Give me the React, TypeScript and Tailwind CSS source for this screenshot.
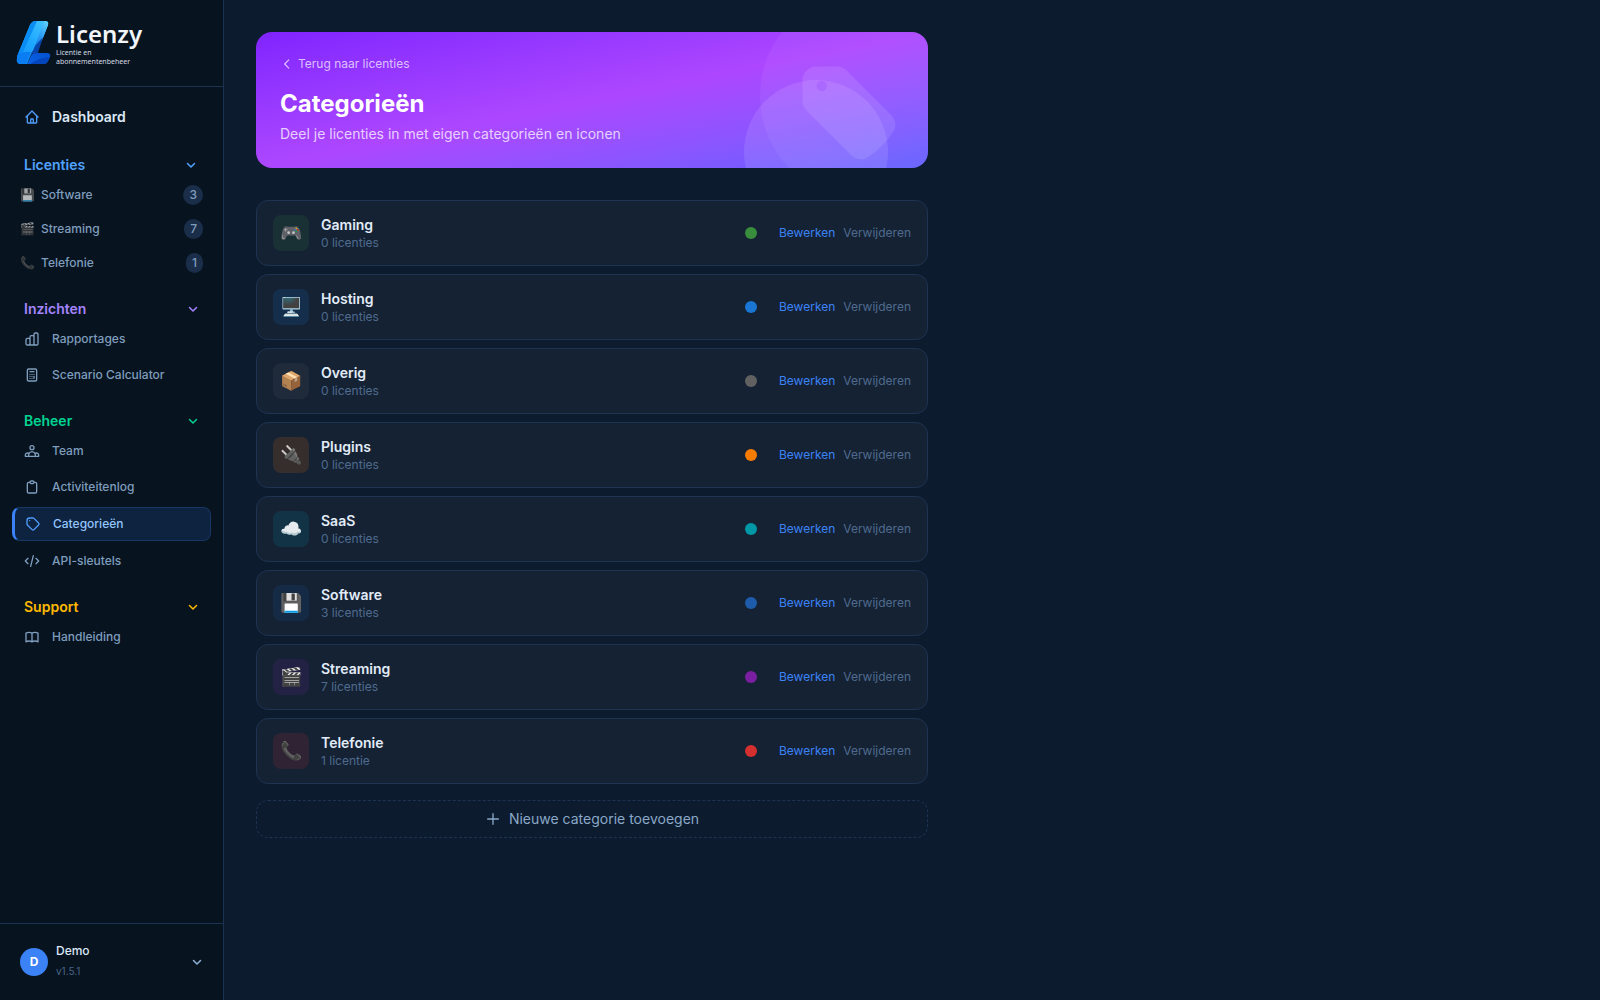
import { useState } from 'react'
import type { ReactNode } from 'react'

interface Category {
  name: string
  emoji: string
  count: number
  dot: string
  tile: string
}

interface NavItem {
  label: string
  path: string
  active?: boolean
}

const categories: Category[] = [
  { name: 'Gaming', emoji: '🎮', count: 0, dot: 'bg-[#388e3c]', tile: 'bg-[#388e3c]/15' },
  { name: 'Hosting', emoji: '🖥️', count: 0, dot: 'bg-[#1976d2]', tile: 'bg-[#1976d2]/15' },
  { name: 'Overig', emoji: '📦', count: 0, dot: 'bg-[#616161]', tile: 'bg-[#616161]/15' },
  { name: 'Plugins', emoji: '🔌', count: 0, dot: 'bg-[#f57c00]', tile: 'bg-[#f57c00]/15' },
  { name: 'SaaS', emoji: '☁️', count: 0, dot: 'bg-[#0097a7]', tile: 'bg-[#0097a7]/15' },
  { name: 'Software', emoji: '💾', count: 3, dot: 'bg-[#1e5cab]', tile: 'bg-[#1e5cab]/15' },
  { name: 'Streaming', emoji: '🎬', count: 7, dot: 'bg-[#7b1fa2]', tile: 'bg-[#7b1fa2]/15' },
  { name: 'Telefonie', emoji: '📞', count: 1, dot: 'bg-[#d32f2f]', tile: 'bg-[#d32f2f]/15' },
]

const icons = {
  home: 'M3 12l2-2m0 0l7-7 7 7M5 10v10a1 1 0 001 1h3m10-11l2 2m-2-2v10a1 1 0 01-1 1h-3m-6 0a1 1 0 001-1v-4a1 1 0 011-1h2a1 1 0 011 1v4a1 1 0 001 1m-6 0h6',
  chart: 'M9 19v-6a2 2 0 00-2-2H5a2 2 0 00-2 2v6a2 2 0 002 2h2a2 2 0 002-2zm0 0V9a2 2 0 012-2h2a2 2 0 012 2v10m-6 0a2 2 0 002 2h2a2 2 0 002-2m0 0V5a2 2 0 012-2h2a2 2 0 012 2v14a2 2 0 01-2 2h-2a2 2 0 01-2-2z',
  calculator: 'M9 7h6m0 10v-3m-3 3h.01M9 17h.01M9 14h.01M12 14h.01M15 11h.01M12 11h.01M9 11h.01M7 21h10a2 2 0 002-2V5a2 2 0 00-2-2H7a2 2 0 00-2 2v14a2 2 0 002 2z',
  team: 'M17 20h5v-2a3 3 0 00-5.356-1.857M17 20H7m10 0v-2c0-.656-.126-1.283-.356-1.857M7 20H2v-2a3 3 0 015.356-1.857M7 20v-2c0-.656.126-1.283.356-1.857m0 0a5.002 5.002 0 019.288 0M15 7a3 3 0 11-6 0 3 3 0 016 0z',
  clipboard: 'M9 5H7a2 2 0 00-2 2v12a2 2 0 002 2h10a2 2 0 002-2V7a2 2 0 00-2-2h-2M9 5a2 2 0 002 2h2a2 2 0 002-2M9 5a2 2 0 012-2h2a2 2 0 012 2',
  tag: 'M7 7h.01M7 3h5c.512 0 1.024.195 1.414.586l7 7a2 2 0 010 2.828l-7 7a2 2 0 01-2.828 0l-7-7A1.994 1.994 0 013 12V7a4 4 0 014-4z',
  code: 'M10 20l4-16m4 4l4 4-4 4M6 16l-4-4 4-4',
  book: 'M12 6.253v13m0-13C10.832 5.477 9.246 5 7.5 5S4.168 5.477 3 6.253v13C4.168 18.477 5.754 18 7.5 18s3.332.477 4.5 1.253m0-13C13.168 5.477 14.754 5 16.5 5c1.747 0 3.332.477 4.5 1.253v13C19.832 18.477 18.247 18 16.5 18c-1.746 0-3.332.477-4.5 1.253',
  down: 'M19 9l-7 7-7-7',
  left: 'M15 19l-7-7 7-7',
  plus: 'M12 4v16m8-8H4',
}

const insights: NavItem[] = [
  { label: 'Rapportages', path: icons.chart },
  { label: 'Scenario Calculator', path: icons.calculator },
]

const management: NavItem[] = [
  { label: 'Team', path: icons.team },
  { label: 'Activiteitenlog', path: icons.clipboard },
  { label: 'Categorieën', path: icons.tag, active: true },
  { label: 'API-sleutels', path: icons.code },
]

const support: NavItem[] = [{ label: 'Handleiding', path: icons.book }]

function Icon({ path, className, stroke = 2 }: { path: string; className: string; stroke?: number }) {
  return (
    <svg
      viewBox="0 0 24 24"
      fill="none"
      stroke="currentColor"
      strokeWidth={stroke}
      strokeLinecap="round"
      strokeLinejoin="round"
      aria-hidden="true"
      className={className}
    >
      <path d={path} />
    </svg>
  )
}

function Logo() {
  return (
    <a href="#" className="flex items-start gap-1">
      <svg viewBox="0 0 36 46" className="h-[46px] w-9 shrink-0" aria-hidden="true">
        <defs>
          <linearGradient id="stem" x1="0.8" y1="0" x2="0.2" y2="1">
            <stop offset="0" stopColor="#3fc0ff" />
            <stop offset="0.5" stopColor="#1ea8ff" />
            <stop offset="1" stopColor="#1492fa" />
          </linearGradient>
          <linearGradient id="side" x1="0.8" y1="0" x2="0.2" y2="1">
            <stop offset="0" stopColor="#5bcdfb" />
            <stop offset="0.5" stopColor="#2fa0f5" />
            <stop offset="1" stopColor="#1272e0" />
          </linearGradient>
          <linearGradient id="foot" x1="0" y1="1" x2="1" y2="0">
            <stop offset="0" stopColor="#0a63e6" />
            <stop offset="1" stopColor="#0450d0" />
          </linearGradient>
        </defs>
        <path d="M28 14 L22 33 L14 38 L20 20 Z" fill="#063c9e" />
        <path d="M20 1 H29 Q33 1 32 5 L26 20 L16 32 L11 44 H5 Q0 44 1 38 Q1 36 2 34 L14 5 Q16 1 20 1 Z" fill="url(#stem)" />
        <path d="M28 1 H29 Q33 1 32 5 L27 18 L18 29 Z" fill="url(#side)" />
        <path d="M27 17 L21 33 H16 L19 26 Z" fill="#0747ac" />
        <path d="M20 1 H21 L7 32 L2 34 L14 5 Q16 1 20 1 Z" fill="#0a8cf5" />
        <path d="M2 34 Q8 31 15 32 L10 44 H5 Q0 44 1 38 Z" fill="#0b7df2" />
        <path d="M15 36 Q17 33 22 33 H31 Q35 33 34 37 L32 41 Q31 44 27 44 H11 Z" fill="url(#foot)" />
        <path d="M34 37 Q24 37 14 44 H27 Q31 44 32 41 Z" fill="#0345bd" />
      </svg>
      <div className="font-['Noto_Sans',sans-serif]">
        <div className="text-2xl leading-7 font-semibold text-[#f1f5f9]">Licenzy</div>
        <div className="w-[90px] text-[7px] leading-[9px] text-[#d5dbe3]">
          Licentie en
          <br />
          abonnementenbeheer
        </div>
      </div>
    </a>
  )
}

function Section({
  title,
  color,
  narrow,
  children,
}: {
  title: string
  color: string
  narrow?: boolean
  children: ReactNode
}) {
  const [open, setOpen] = useState(true)

  return (
    <section className="flex flex-col gap-1">
      <button
        onClick={() => setOpen(!open)}
        className={`flex items-center justify-between pl-3 text-sm font-semibold ${narrow ? 'pr-3.5' : 'pr-3'} ${color}`}
      >
        {title}
        <Icon path={icons.down} className="size-3" stroke={3} />
      </button>
      {open && children}
    </section>
  )
}

function NavList({ items }: { items: NavItem[] }) {
  return (
    <ul className="flex flex-col gap-1">
      {items.map(item => (
        <li key={item.label}>
          <a
            href="#"
            className={
              item.active
                ? 'flex items-center gap-3 rounded-lg border border-l-3 border-[#173764] border-l-[#3b82f6] bg-[#0d2340] py-2 pr-3 pl-2.5 text-xs font-medium text-[#93c5fd]'
                : 'flex items-center gap-3 px-3 py-2 text-xs font-medium text-[#7f9dbd]'
            }
          >
            <Icon path={item.path} className={item.active ? 'size-4 text-[#4f9cf9]' : 'size-4'} />
            {item.label}
          </a>
        </li>
      ))}
    </ul>
  )
}

function Sidebar() {
  return (
    <aside className="flex w-56 shrink-0 flex-col border-r border-[#1c3253] bg-[#071420]">
      <div className="border-b border-[#1c3253] px-4 py-5">
        <Logo />
      </div>

      <nav className="flex flex-1 flex-col gap-5 p-3">
        <a href="#" className="flex items-center gap-3 px-3 py-2 text-sm font-semibold text-[#dbe8f6]">
          <Icon path={icons.home} className="size-4 text-[#4f9cf9]" />
          Dashboard
        </a>

        <Section title="Licenties" color="text-[#51a2ff]" narrow>
          <ul className="flex flex-col gap-0.5">
            {categories
              .filter(c => c.count > 0)
              .map(c => (
                <li key={c.name}>
                  <a href="#" className="flex items-center gap-1.5 px-2 py-1.5 text-xs font-medium text-[#7f9dbd]">
                    <span className="w-[15px] text-xs opacity-70">{c.emoji}</span>
                    <span className="flex-1">{c.name}</span>
                    <span className="rounded-full bg-[#1a2e4a] px-1.5 py-0.5">{c.count}</span>
                  </a>
                </li>
              ))}
          </ul>
        </Section>

        <Section title="Inzichten" color="text-[#a684ff]">
          <NavList items={insights} />
        </Section>

        <Section title="Beheer" color="text-[#00d492]">
          <NavList items={management} />
        </Section>

        <Section title="Support" color="text-[#ffb900]">
          <NavList items={support} />
        </Section>
      </nav>

      <div className="border-t border-[#1c3253] p-3">
        <button className="flex w-full items-center gap-2 px-2 py-1 text-left">
          <span className="flex size-7 items-center justify-center rounded-full bg-[#3b82f6] text-xs font-bold text-white">
            D
          </span>
          <span className="flex-1 pb-0.5">
            <span className="block text-xs leading-[21px] font-medium text-[#dbe8f6]">Demo</span>
            <span className="block text-[10px] leading-[21px] text-[#4a6485]">v1.5.1</span>
          </span>
          <Icon path={icons.down} className="size-3 text-[#8fb0d2]" stroke={3} />
        </button>
      </div>
    </aside>
  )
}

function Banner() {
  return (
    <header className="relative overflow-hidden rounded-2xl bg-linear-to-br from-violet-600 via-purple-500 to-indigo-500 p-6">
      <div className="absolute -top-10 -right-10 size-52 rounded-full bg-white/5" />
      <div className="absolute right-10 -bottom-14 size-36 rounded-full bg-white/10" />
      <svg
        viewBox="0 0 24 24"
        fill="currentColor"
        aria-hidden="true"
        className="absolute right-6 bottom-0 size-28 text-white/10"
      >
        <path
          fillRule="evenodd"
          clipRule="evenodd"
          d="M5.25 2.25a3 3 0 0 0-3 3v4.318a3 3 0 0 0 .879 2.121l9.58 9.581c.92.92 2.39 1.186 3.548.428a18.849 18.849 0 0 0 5.441-5.44c.758-1.16.492-2.629-.428-3.548l-9.58-9.581a3 3 0 0 0-2.122-.879H5.25ZM6.375 7.5a1.125 1.125 0 1 0 0-2.25 1.125 1.125 0 0 0 0 2.25Z"
        />
      </svg>
      <div className="relative">
        <a href="#" className="flex w-fit items-center gap-1 text-xs text-white/70">
          <Icon path={icons.left} className="size-3.5" />
          Terug naar licenties
        </a>
        <h1 className="mt-4 text-2xl font-bold text-white">Categorieën</h1>
        <p className="mt-1 text-sm text-white/75">Deel je licenties in met eigen categorieën en iconen</p>
      </div>
    </header>
  )
}

function CategoryRow({ category }: { category: Category }) {
  return (
    <li className="flex items-center gap-3 rounded-xl border border-[#1e3352] bg-[#152234] px-4 py-3.5">
      <div className={`flex size-9 items-center justify-center rounded-lg text-lg ${category.tile}`}>
        {category.emoji}
      </div>
      <div className="flex-1">
        <p className="text-sm font-semibold text-[#e2ecf8]">{category.name}</p>
        <p className="text-xs text-[#4f6b8e]">
          {category.count} {category.count === 1 ? 'licentie' : 'licenties'}
        </p>
      </div>
      <div className="flex items-center gap-[22px]">
        <span className={`size-3 rounded-full ${category.dot}`} />
        <div className="flex gap-2 text-xs">
          <button className="text-[#3b82f6]">Bewerken</button>
          <button className="text-[#4f6b8e]">Verwijderen</button>
        </div>
      </div>
    </li>
  )
}

export default function App() {
  return (
    <div className="flex min-h-screen bg-[#0c1b2d] font-['Inter',sans-serif]">
      <Sidebar />
      <main className="flex-1 p-8">
        <div className="max-w-2xl">
          <Banner />
          <ul className="mt-8 flex flex-col gap-2">
            {categories.map(category => (
              <CategoryRow key={category.name} category={category} />
            ))}
          </ul>
          <button className="mt-4 flex w-full items-center justify-center gap-2 rounded-xl border border-dashed border-[#1e3352] py-2 text-sm text-[#8aa8c8]">
            <Icon path={icons.plus} className="size-4" />
            Nieuwe categorie toevoegen
          </button>
        </div>
      </main>
    </div>
  )
}
